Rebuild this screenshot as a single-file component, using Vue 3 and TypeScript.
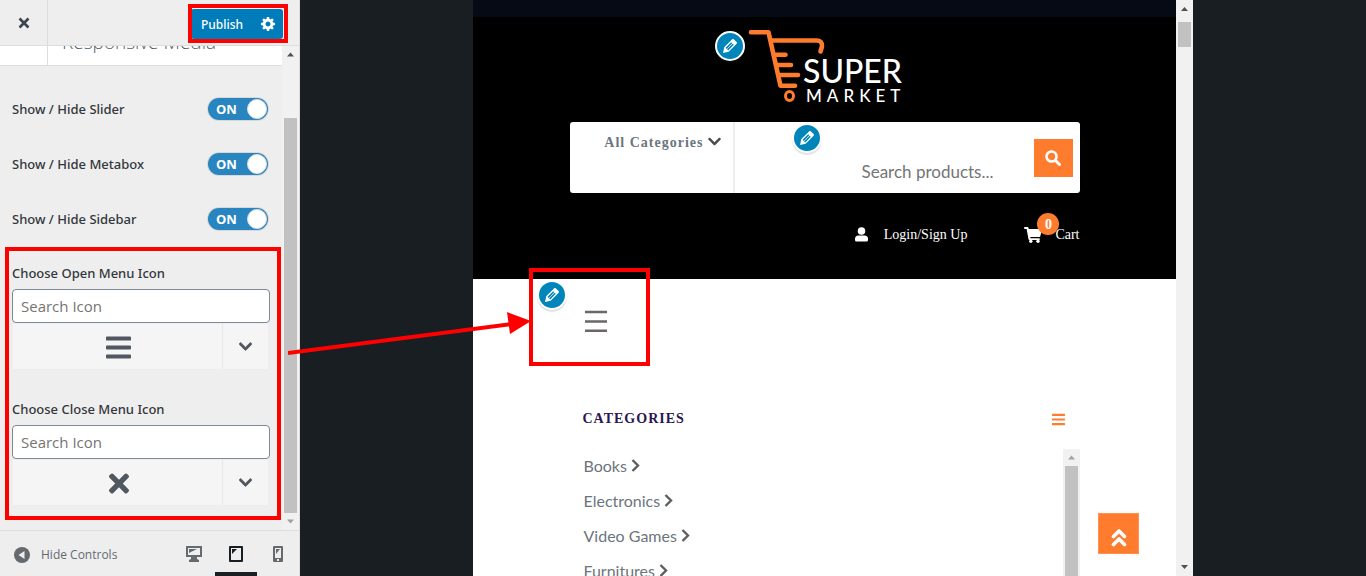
<script setup lang="ts">
import { ref } from 'vue'

interface Toggle { id: string; label: string; on: boolean }
interface Picker { id: string; label: string; icon: 'bars' | 'times' }

const toggles = ref<Toggle[]>([
  { id: 'slider', label: 'Show / Hide Slider', on: true },
  { id: 'metabox', label: 'Show / Hide Metabox', on: true },
  { id: 'sidebar', label: 'Show / Hide Sidebar', on: true },
])
const pickers: Picker[] = [
  { id: 'open-icon', label: 'Choose Open Menu Icon', icon: 'bars' },
  { id: 'close-icon', label: 'Choose Close Menu Icon', icon: 'times' },
]
const categories: string[] = ['Books', 'Electronics', 'Video Games', 'Furnitures']

const bars = 'M16 132h416c9 0 16-7 16-16V76c0-9-7-16-16-16H16C7 60 0 67 0 76v40c0 9 7 16 16 16zm0 160h416c9 0 16-7 16-16v-40c0-9-7-16-16-16H16c-9 0-16 7-16 16v40c0 9 7 16 16 16zm0 160h416c9 0 16-7 16-16v-40c0-9-7-16-16-16H16c-9 0-16 7-16 16v40c0 9 7 16 16 16z'
const times = 'M242.700 256l100.100-100.100c12.300-12.300 12.300-32.200 0-44.500l-22.200-22.200c-12.300-12.300-32.200-12.300-44.500 0L176 189.300 75.900 89.200c-12.300-12.300-32.200-12.300-44.500 0L9.200 111.500c-12.300 12.300-12.300 32.200 0 44.500L109.300 256 9.200 356.100c-12.300 12.300-12.300 32.200 0 44.500l22.200 22.200c12.300 12.300 32.200 12.300 44.500 0L176 322.700l100.100 100.100c12.300 12.300 32.200 12.300 44.500 0l22.200-22.200c12.300-12.300 12.300-32.200 0-44.500L242.700 256z'
const chevron = 'M207 381.500L12.700 187.100c-9.400-9.400-9.400-24.600 0-33.900l22.700-22.700c9.400-9.400 24.500-9.400 33.900 0L224 284.500l154.700-154c9.400-9.300 24.500-9.300 33.900 0l22.700 22.700c9.400 9.400 9.400 24.600 0 33.900L241 381.500c-9.400 9.400-24.600 9.400-34 0z'
const pencil = 'M13.890 3.390l2.710 2.720c.46.460.42 1.240.030 1.640l-8.010 8.020-5.560 1.160 1.160-5.580s7.600-7.630 7.990-8.030c.39-.390 1.220-.390 1.680.070zm-2.730 2.790l-5.590 5.610 1.110 1.110 5.540-5.650zm-2.970 8.230l5.580-5.600-1.070-1.080-5.590 5.600z'
</script>

<template>
  <div class="customizer">
    <aside class="panel">
      <header class="panel-head">
        <button class="close" type="button" aria-label="Close">
          <svg width="20" height="20" viewBox="0 0 20 20"><path d="M5.500 5.500l9 9M14.500 5.500l-9 9" stroke="#3c434a" stroke-width="2.600" /></svg>
        </button>
        <div class="publish">
          <button type="button" class="publish-save">Publish</button>
          <button type="button" class="publish-gear" aria-label="Publish settings">
            <svg width="14" height="14" viewBox="1 2 17 17" fill="#fff"><path d="M18 12h-2.180c-.17.700-.44 1.350-.81 1.930l1.540 1.540-2.100 2.100-1.540-1.540c-.58.360-1.230.630-1.910.790V19H8v-2.180c-.68-.160-1.330-.430-1.910-.790l-1.540 1.540-2.120-2.120 1.540-1.540c-.36-.580-.63-1.230-.79-1.910H1V9.030h2.170c.16-.700.44-1.350.8-1.940L2.430 5.550l2.100-2.100 1.540 1.540c.58-.370 1.240-.640 1.930-.810V2h3v2.180c.68.160 1.330.430 1.910.790l1.540-1.540 2.120 2.120-1.540 1.540c.36.590.64 1.240.8 1.940H18V12zm-8.500 1.500c1.660 0 3-1.340 3-3s-1.340-3-3-3-3 1.340-3 3 1.340 3 3 3z" /></svg>
          </button>
        </div>
      </header>

      <div class="panel-scroll">
        <div class="panel-content">
          <div class="section-title">
            <span class="section-back"></span>
            <h3>Responsive Media</h3>
          </div>
          <div class="controls">
            <label v-for="t in toggles" :key="t.id" class="toggle-row" :for="t.id">
              <span>{{ t.label }}</span>
              <span class="switch">
                <input :id="t.id" v-model="t.on" type="checkbox" />
                <span class="track"><b>{{ t.on ? 'ON' : 'OFF' }}</b><i></i></span>
              </span>
            </label>
            <div v-for="p in pickers" :key="p.id" class="picker">
              <label :for="p.id">{{ p.label }}</label>
              <input :id="p.id" type="text" placeholder="Search Icon" />
              <div class="picker-row">
                <button type="button" class="picked" aria-label="Selected icon">
                  <svg v-if="p.icon === 'bars'" width="25" height="29" viewBox="0 0 448 512"><path :d="bars" fill="#50575e" /></svg>
                  <svg v-else width="20" height="29" viewBox="0 0 352 512"><path :d="times" fill="#50575e" /></svg>
                </button>
                <button type="button" class="picker-open" aria-label="Show icons">
                  <svg width="13" height="15" viewBox="0 0 448 512"><path :d="chevron" fill="#50575e" stroke="#50575e" stroke-width="24" /></svg>
                </button>
              </div>
            </div>
          </div>
        </div>
        <div class="bar panel-bar">
          <svg width="17" height="17"><path d="M5 10.500l3.500-4 3.500 4z" fill="#505050" /></svg>
          <span class="thumb"></span>
          <svg width="17" height="17"><path d="M5 6.500l3.500 4 3.500-4z" fill="#a0a0a0" /></svg>
        </div>
      </div>

      <footer class="panel-foot">
        <button type="button" class="hide">
          <svg width="16" height="16" viewBox="0 0 16 16"><circle cx="8" cy="8" r="8" fill="#656a6f" /><path d="M10.500 4v8L4.500 8z" fill="#eee" /></svg>
          <span>Hide Controls</span>
        </button>
        <div class="devices">
          <button type="button" aria-label="Desktop preview">
            <svg width="18" height="18" viewBox="0 0 18 18"><path d="M1 1h16v11h-5v2l2 1v2H4v-2l2-1v-2H1zM3 3v7h12V3z" fill="#656a6f" fill-rule="evenodd" /><path d="M4 4h8L4 8z" fill="#656a6f" /></svg>
          </button>
          <button type="button" class="active" aria-label="Tablet preview">
            <svg width="18" height="18" viewBox="0 0 18 18"><path d="M3 1h12q1 0 1 1v14q0 1-1 1H3q-1 0-1-1V2q0-1 1-1zM4 3v12h10V3z" fill="#191e23" fill-rule="evenodd" /><path d="M5 4h5L5 9z" fill="#191e23" /></svg>
          </button>
          <button type="button" aria-label="Mobile preview">
            <svg width="18" height="18" viewBox="0 0 18 18"><path d="M5 1h8q1 0 1 1v14q0 1-1 1H5q-1 0-1-1V2q0-1 1-1zM6 3v10h6V3zM8 14v2h2v-2z" fill="#656a6f" fill-rule="evenodd" /><path d="M7 4h4L7 9z" fill="#656a6f" /></svg>
          </button>
        </div>
      </footer>
    </aside>

    <main class="stage">
      <div class="device">
        <div class="site">
          <div class="topbar"></div>
          <div class="site-head">
            <div class="container head-inner">
              <a href="#" class="logo" aria-label="Super Market">
                <svg class="logo-art" width="156" height="78" viewBox="0 0 156 78">
                  <g fill="none" stroke="#ff7b2e" stroke-width="4.600" stroke-linecap="round" stroke-linejoin="round">
                    <path d="M4 5.300h17.500l12 53.400h14.500" />
                    <path d="M25 13.500h44.500q6 0 5.500 6l-1.500 5" />
                    <path d="M28 27.700h10.500M30 38h14M32 48h19" />
                    <ellipse cx="42.500" cy="69" rx="4" ry="4.500" stroke-width="3" />
                  </g>
                  <text x="56" y="56" class="logo-super">SUPER</text>
                  <text x="59" y="75" class="logo-market">MARKET</text>
                </svg>
                <span class="edit edit-logo"><svg width="20" height="20" viewBox="0 0 20 20"><path :d="pencil" fill="#fff" /></svg></span>
              </a>
              <form class="search" @submit.prevent>
                <button type="button" class="cats" aria-haspopup="true">All Categories
                  <svg width="13" height="15" viewBox="0 0 448 512"><path :d="chevron" fill="#4a4a4a" /></svg>
                </button>
                <div class="search-field">
                  <input type="search" placeholder="Search products..." aria-label="Search products" />
                  <button type="submit" aria-label="Search">
                    <svg width="16" height="16" viewBox="0 0 16 16" fill="none" stroke="#fff"><circle cx="6.500" cy="6.500" r="5" stroke-width="2.600" /><path d="M10.500 10.500l4 4" stroke-width="3" stroke-linecap="round" /></svg>
                  </button>
                </div>
                <span class="edit edit-search"><svg width="20" height="20" viewBox="0 0 20 20"><path :d="pencil" fill="#fff" /></svg></span>
              </form>
              <nav class="account">
                <a href="#" class="login">
                  <svg width="13" height="15" viewBox="0 0 13 15" fill="#fff"><circle cx="6.500" cy="4" r="3.800" /><path d="M3.500 8.500h6q3.500 0 3.500 3.500v1q0 1.500-1.500 1.500h-10Q0 14.500 0 13v-1q0-3.500 3.500-3.500z" /></svg>
                  Login/Sign Up
                </a>
                <a href="#" class="cart">
                  <svg width="18" height="16" viewBox="0 0 18 16" fill="#fff"><path d="M0 1q0-1 1-1h2.500q.8 0 1 .8L4.800 2H17q1 0 .8 1l-1.500 6.300q-.2.700-1 .700H6.300l.2 1.200H15q1 0 .8 1l-.2.800H5.500q-.8 0-1-.8L2.600 2H1Q0 2 0 1z" /><circle cx="6.800" cy="14.300" r="1.700" /><circle cx="14" cy="14.300" r="1.700" /></svg>
                  Cart
                  <span class="badge">0</span>
                </a>
              </nav>
            </div>
          </div>
          <div class="container menu-row">
            <button type="button" class="hamburger" aria-label="Open menu">
              <svg width="22" height="22" viewBox="0 0 22 22"><path d="M0 2h22M0 11.500h22M0 20.800h22" stroke="#6b6767" stroke-width="2.400" /></svg>
            </button>
            <span class="edit edit-menu"><svg width="20" height="20" viewBox="0 0 20 20"><path :d="pencil" fill="#fff" /></svg></span>
          </div>
          <section class="container categories">
            <div class="cat-head">
              <h2>CATEGORIES</h2>
              <svg width="13" height="15" viewBox="0 0 448 512"><path :d="bars" fill="#ff7b2e" /></svg>
            </div>
            <div class="cat-body">
              <ul>
                <li v-for="c in categories" :key="c">
                  <a href="#">{{ c }} <svg width="9" height="15" viewBox="0 0 9 15"><path d="M1.500 2l5.500 5.500L1.500 13" fill="none" stroke="#5e5e5e" stroke-width="2.400" /></svg></a>
                </li>
              </ul>
              <div class="bar cat-bar">
                <svg width="17" height="17"><path d="M5 10.500l3.500-4 3.500 4z" fill="#a3a3a3" /></svg>
                <span class="thumb"></span>
              </div>
            </div>
          </section>
          <a href="#" class="to-top" aria-label="Back to top">
            <svg width="16" height="20" viewBox="0 0 16 20" fill="none" stroke="#fff" stroke-width="3.600" stroke-linecap="round" stroke-linejoin="round"><path d="M2.500 9.500L8 4l5.500 5.500M2.500 17.500L8 12l5.500 5.500" /></svg>
          </a>
        </div>
        <div class="bar site-bar">
          <svg width="17" height="17"><path d="M5 11l3.500-4 3.500 4z" fill="#505050" /></svg>
          <span class="thumb"></span>
          <svg width="17" height="17"><path d="M5 6l3.500 4 3.500-4z" fill="#505050" /></svg>
        </div>
      </div>
    </main>

    <span class="mark mark-publish"></span>
    <span class="mark mark-pickers"></span>
    <span class="mark mark-menu"></span>
    <svg class="arrow" width="244" height="46" viewBox="0 0 244 46">
      <path d="M0 41L224 12" stroke="#f00" stroke-width="4" />
      <path d="M219 0l24 9-21 13z" fill="#f00" />
    </svg>
  </div>
</template>

<style>
body { margin: 0; }
</style>

<style scoped>
* { box-sizing: border-box; }
button { border: 0; padding: 0; background: none; font: inherit; color: inherit; display: flex; align-items: center; justify-content: center; }
a { color: inherit; text-decoration: none; }
svg { display: block; flex: none; }
h2, h3, ul { margin: 0; padding: 0; font-weight: 400; list-style: none; }

.customizer { position: relative; display: flex; height: 100vh; overflow: hidden; background: #191e23; font-family: "Open Sans", "Noto Sans", sans-serif; }

.panel { display: flex; flex-direction: column; width: 300px; flex: none; background: #eee; border-right: 1px solid #ddd; color: #32373c; }
.panel-head { display: flex; justify-content: space-between; height: 46px; flex: none; border-bottom: 1px solid #ddd; }
.close { width: 48px; border-right: 1px solid #ddd; }
.publish { display: flex; height: 30px; margin: 9px 16px 0 0; border-radius: 3px; background: #007cba; color: #fff; font: 500 12px "Noto Sans", sans-serif; }
.publish-save { width: 62px; }
.publish-gear { width: 30px; }

.panel-scroll { display: flex; flex: 1; min-height: 0; }
.panel-content { flex: 1; min-width: 0; overflow: hidden; }
.section-title { display: flex; height: 20px; background: #fff; border-bottom: 1px solid #ddd; overflow: hidden; align-items: flex-end; }
.section-back { width: 48px; height: 20px; border-right: 1px solid #ddd; }
.section-title h3 { padding: 0 0 13px 14px; font-size: 19px; line-height: 20px; font-weight: 300; color: #555d66; }
.controls { padding: 15px 12px 0; }
.toggle-row { display: flex; align-items: center; justify-content: space-between; height: 55px; padding-right: 2px; font: 500 13px "Noto Sans", sans-serif; }
.switch { position: relative; display: block; }
.switch input { position: absolute; inset: 0; width: 100%; height: 100%; margin: 0; opacity: 0; }
.track { display: flex; align-items: center; justify-content: space-between; width: 60px; height: 22px; padding: 0 1px 0 8px; border-radius: 11px; background: #2885bf; box-shadow: 0 0 0 1px #d8d8d8; color: #fff; font: 13px "Open Sans", sans-serif; }
.track i { width: 20px; height: 20px; border-radius: 50%; background: #fff; border: 1px solid #d8dfe5; }
.picker { display: flex; flex-direction: column; padding-top: 17px; margin-bottom: 13px; }
.picker label { font: 500 13px/20px "Noto Sans", sans-serif; }
.picker input { width: 100%; height: 34px; margin-top: 6px; padding: 0 8px; border: 1px solid #7e8993; border-radius: 4px; background: #fff; font: 15px "Open Sans", "Noto Sans", sans-serif; }
.picker input::placeholder { color: #757575; opacity: 1; }
.picker-row { display: flex; height: 46px; margin: 0 2px 0 1px; padding-top: 1px; }
.picked { flex: 1; padding: 2px 0 0 2px; background: #f5f5f5; border-right: 1px solid #e9e9e9; }
.picker-open { width: 45px; background: #f5f5f5; }

.bar { display: flex; flex-direction: column; width: 17px; flex: none; background: #f1f1f1; }
.thumb { display: block; margin: 0 2px; background: #c1c1c1; }
.panel-bar .thumb { flex: 1; margin-top: 55px; }

.panel-foot { display: flex; justify-content: space-between; height: 46px; flex: none; border-top: 1px solid #ddd; color: #656a6f; }
.hide { gap: 11px; padding: 2px 0 0 14px; font-size: 12px; }
.devices { display: flex; }
.devices button { width: 42px; }
.devices .active { box-shadow: inset 0 -4px #191e23; }

.stage { display: flex; flex: 1; justify-content: center; min-width: 0; }
.device { display: flex; width: 720px; max-width: 100%; height: 100%; }
.site { position: relative; flex: 1; min-width: 0; overflow: hidden; background: #fff; }
.site-bar .thumb { height: 25px; margin-top: 5px; margin-bottom: auto; }
.container { width: 510px; max-width: 100%; margin: 0 auto; }
.topbar { height: 17px; background: #060a14; }
.site-head { background: #000; }
.head-inner { display: flex; flex-direction: column; padding: 10px 0 35px; }
.logo { position: relative; align-self: center; }
.logo-art { overflow: visible; }
.logo-super { font: 500 32px Lato, sans-serif; fill: #fff; }
.logo-market { font: 500 17px Lato, sans-serif; letter-spacing: 5px; fill: #fff; }
.search { position: relative; display: flex; height: 71px; margin-top: 17px; border-radius: 3px; background: #fff; }
.cats { width: 165px; flex: none; padding: 12px 12px 0 0; gap: 4px; align-items: flex-start; justify-content: flex-end; border-right: 2px solid #f0eded; color: #6c757d; font: 700 14px/18px "Liberation Serif", serif; letter-spacing: 1px; }
.search-field { display: flex; flex: 1; min-width: 0; justify-content: flex-end; padding: 17px 7px 0 127px; }
.search-field input { flex: 1; min-width: 0; height: 36px; margin-top: 14px; padding: 0; border: 0; background: none; font: 17px Lato, sans-serif; }
.search-field input::placeholder { color: #757575; opacity: 1; }
.search-field button { width: 39px; height: 38px; flex: none; background: #ff7b2e; }
.account { display: flex; justify-content: flex-end; gap: 57px; margin-top: 32px; color: #fff; font: 14px/19px "Liberation Serif", serif; }
.account a { position: relative; display: flex; align-items: center; gap: 16px; }
.account .cart { gap: 13px; }
.badge { position: absolute; left: 13px; top: -12px; width: 22px; height: 22px; border-radius: 50%; background: #ff7b2e; font-weight: 700; line-height: 24px; text-align: center; }

.edit { position: absolute; display: flex; align-items: center; justify-content: center; width: 30px; height: 30px; border: 2px solid #fff; border-radius: 50%; background: #0085ba; box-shadow: 0 2px 1px rgba(46, 68, 83, 0.15); }
.edit-logo { left: -32px; top: 4px; }
.edit-search { left: 222px; top: 1px; }
.edit-menu { left: -33px; top: 1px; }

.menu-row { position: relative; padding: 31px 0 0 15px; }
.hamburger { width: 22px; height: 22px; }
.categories { padding: 77px 0 0 13px; }
.cat-head { display: flex; align-items: center; justify-content: space-between; height: 20px; padding-right: 15px; }
.cat-head h2 { color: #2a1650; font: 700 14px/20px "Liberation Serif", serif; letter-spacing: 1px; }
.cat-body { display: flex; justify-content: space-between; height: 260px; margin-top: 20px; }
.cat-body ul { padding-left: 1px; color: #6c757d; font: 16px/33px Lato, sans-serif; }
.cat-body li { height: 35px; }
.cat-body a { display: flex; align-items: center; gap: 4px; }
.cat-bar .thumb { flex: 1; }
.to-top { position: absolute; right: 37px; bottom: 22px; display: flex; align-items: center; justify-content: center; width: 41px; height: 41px; padding-top: 6px; border: 1px solid #ff9150; background: #ff7b2e; }

.mark { position: absolute; border: 4px solid #f00; pointer-events: none; }
.mark-publish { left: 188px; top: 4px; width: 100px; height: 39px; }
.mark-pickers { left: 5px; top: 247px; width: 276px; height: 273px; }
.mark-menu { left: 529px; top: 268px; width: 121px; height: 98px; }
.arrow { position: absolute; left: 288px; top: 312px; pointer-events: none; }
</style>
